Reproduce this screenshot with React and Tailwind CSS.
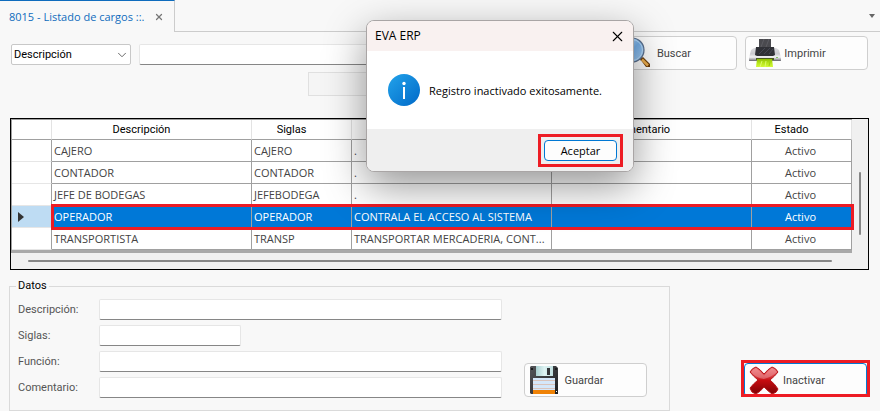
import { ChevronDown, X } from "lucide-react";

const rows = [
  { descripcion: "CAJERO", siglas: "CAJERO", funcion: ".", comentario: "", estado: "Activo" },
  { descripcion: "CONTADOR", siglas: "CONTADOR", funcion: ".", comentario: "", estado: "Activo" },
  { descripcion: "JEFE DE BODEGAS", siglas: "JEFEBODEGA", funcion: ".", comentario: "", estado: "Activo" },
  {
    descripcion: "OPERADOR",
    siglas: "OPERADOR",
    funcion: "CONTRALA EL ACCESO AL SISTEMA",
    comentario: "",
    estado: "Activo",
    selected: true,
  },
  {
    descripcion: "TRANSPORTISTA",
    siglas: "TRANSP",
    funcion: "TRANSPORTAR MERCADERIA, CONT...",
    comentario: "",
    estado: "Activo",
  },
];

const fields = [
  { id: "descripcion", label: "Descripción:" },
  { id: "siglas", label: "Siglas:", short: true },
  { id: "funcion", label: "Función:" },
  { id: "comentario", label: "Comentario:" },
];

const inputStyle =
  "h-[21px] min-w-0 rounded-[2px] border border-[#e6e6e6] border-b-[#868686] bg-white px-1 outline-none";

function SearchIcon() {
  return (
    <svg width="32" height="32" viewBox="0 0 32 32" className="shrink-0">
      <defs>
        <linearGradient id="lens" x1="0" y1="0" x2="1" y2="1">
          <stop offset="0" stopColor="#c9e2fa" />
          <stop offset="0.5" stopColor="#76aee6" />
          <stop offset="1" stopColor="#a9d2f7" />
        </linearGradient>
      </defs>
      <path d="M20 19l4 4" stroke="#9a9a9a" strokeWidth="3" />
      <path d="M22 22l3-2 7 7v3h-4z" fill="#6b3c0a" />
      <path d="M24 22.500l6 6" stroke="#eeb050" strokeWidth="2.500" />
      <circle cx="14" cy="13" r="12" fill="url(#lens)" stroke="#5b6f8c" strokeWidth="1.200" />
      <circle cx="14" cy="13" r="10.500" fill="none" stroke="#b9dcfa" strokeWidth="1" />
    </svg>
  );
}

function PrinterIcon() {
  return (
    <svg width="32" height="28" viewBox="0 0 32 28" className="shrink-0">
      <defs>
        <linearGradient id="body" x1="0" y1="0" x2="0" y2="1">
          <stop offset="0" stopColor="#dcdce0" />
          <stop offset="0.45" stopColor="#c9c9ce" />
          <stop offset="0.7" stopColor="#f4f4f6" />
          <stop offset="1" stopColor="#6f6f76" />
        </linearGradient>
        <linearGradient id="sheet" x1="0" y1="0" x2="0" y2="1">
          <stop offset="0" stopColor="#8fc000" />
          <stop offset="0.5" stopColor="#b6e61a" />
          <stop offset="1" stopColor="#d4f93a" />
        </linearGradient>
      </defs>
      <path d="M10 0h12v9H10z" fill="#4a4a4f" />
      <path d="M12 8l3-8M17 8l3-8" stroke="#5d5d63" />
      <path d="M5 9h22l3 2 2 8v3H0v-3l2-8z" fill="url(#body)" />
      <path d="M7 8h18l1 8-2 1H8l-2-1z" fill="#303137" />
      <path d="M10 15l6-6M15 15l6-6M20 15l4-5" stroke="#464853" />
      <path d="M1 21h30v1H1z" fill="#74747b" />
      <path d="M7 19h18v2H7z" fill="#4d5c22" />
      <path d="M8 20h15l1 8H7z" fill="url(#sheet)" />
      <path d="M11 28l2-6M16 28l1-6" stroke="#dcfa6a" />
      <path d="M20 27l1-4" stroke="#9ed010" />
      <path d="M27 18h2v1h-2z" fill="#7fbf63" />
    </svg>
  );
}

function FloppyIcon() {
  return (
    <svg width="28" height="28" viewBox="0 0 28 28" className="shrink-0">
      <defs>
        <linearGradient id="case" x1="0" y1="0" x2="1" y2="1">
          <stop offset="0" stopColor="#55565a" />
          <stop offset="1" stopColor="#1d1e21" />
        </linearGradient>
        <linearGradient id="shutter" x1="0" y1="0" x2="1" y2="0">
          <stop offset="0" stopColor="#a9cfd0" />
          <stop offset="0.5" stopColor="#def3f3" />
          <stop offset="1" stopColor="#c1dfe0" />
        </linearGradient>
      </defs>
      <path d="M1 0h25l2 2v26H1l-1-1V1z" fill="url(#case)" />
      <path d="M6 0h17v10H6z" fill="url(#shutter)" />
      <path d="M17 2h3v7h-3z" fill="#34363a" />
      <path d="M1 2h2v2H1zM25 2h2v2h-2z" fill="#1b1c1e" />
      <path d="M3 12h22v16H3z" fill="#d5e7fa" />
      <path d="M3 14.500h22M3 18.500h22M3 22.500h22" stroke="#d9c3bb" />
      <path d="M3 24h22v4H3z" fill="#ef8206" />
      <path d="M26 25h1v1h-1z" fill="#ffffff" />
    </svg>
  );
}

function CrossIcon() {
  return (
    <svg width="30" height="29" viewBox="0 0 30 29" className="shrink-0">
      <defs>
        <linearGradient id="cross" x1="0" y1="0" x2="0" y2="1">
          <stop offset="0" stopColor="#ee6a6e" />
          <stop offset="0.35" stopColor="#d83a40" />
          <stop offset="0.5" stopColor="#c60c10" />
          <stop offset="1" stopColor="#7d0205" />
        </linearGradient>
      </defs>
      <path
        d="M7 1Q11 3 15 8Q19 3 23 1Q27 2 29 6Q26 10 21 14Q26 18 29 23Q28 27 23 28Q19 25 15 21Q11 26 7 28Q2 27 1 22Q4 18 9 14Q4 10 1 6Q3 2 7 1Z"
        fill="url(#cross)"
        stroke="#b5171b"
        strokeWidth="1"
      />
      <path d="M7 2Q11 5 15 9.500Q19 5 23 2Q26 3 28 6Q23 11 15 13Q7 12 2 6Q4 3 7 2Z" fill="#ffffff" opacity="0.25" />
    </svg>
  );
}

function InfoIcon() {
  return (
    <svg width="32" height="32" viewBox="0 0 32 32" className="shrink-0">
      <defs>
        <linearGradient id="info" x1="0" y1="0" x2="1" y2="1">
          <stop offset="0" stopColor="#23a3ea" />
          <stop offset="1" stopColor="#0069c8" />
        </linearGradient>
      </defs>
      <circle cx="16" cy="16" r="16" fill="url(#info)" />
      <circle cx="16" cy="9.500" r="1.700" fill="#ffffff" />
      <path d="M15 13h2v12h-2z" fill="#ffffff" />
    </svg>
  );
}

function ToolButton({ icon, children, active }) {
  return (
    <button
      type="button"
      className={`flex h-[34px] w-[123px] shrink-0 items-center rounded-[4px] border bg-[#fdfdfd] text-[#444] ${
        active ? "border-[#0078d4]" : "border-[#cfcfcf]"
      }`}
    >
      <span className="flex w-[37px] justify-center">{icon}</span>
      <span className="w-11 pt-0.5 text-center">{children}</span>
    </button>
  );
}

function RolesTable() {
  const head = "h-[20px] border-r border-b border-r-[#e3e3e3] border-b-[#a0a0a0] p-0 pt-px pr-5 font-normal";
  return (
    <div className="mt-[22px] mr-[11px] ml-[10px] border border-black bg-[#f0f0f0]">
      <div className="flex">
        <div className="min-w-0 flex-1 border-t border-l border-[#a0a0a0]">
          <table className="w-full table-fixed border-separate border-spacing-0 border-b-3 border-[#a8a8a8] bg-white">
            <colgroup>
              <col className="w-[40px]" />
              <col className="w-[200px]" />
              <col className="w-[100px]" />
              <col className="w-[200px]" />
              <col className="w-[200px]" />
              <col className="w-[100px]" />
            </colgroup>
            <thead>
              <tr className="text-black">
                <td className={head}></td>
                <th className={head}>Descripción</th>
                <th className={head}>Siglas</th>
                <th className={head}>Función</th>
                <th className={head}>Comentario</th>
                <th className={head}>Estado</th>
              </tr>
            </thead>
            <tbody className="font-['Open_Sans',Tahoma,sans-serif]">
              {rows.map((row) => {
                const cell = `h-[22px] truncate border-r border-b border-[#a0a0a0] py-0 pr-1 pl-[2px] ${
                  row.selected ? "bg-[#0078d7] text-white" : ""
                }`;
                return (
                  <tr key={row.descripcion} className="relative text-[#444]">
                    <td
                      className={`border-r border-b border-r-[#a0a0a0] border-b-[#e6e6e6] p-0 ${
                        row.selected ? "bg-[#bedcf3]" : ""
                      }`}
                    >
                      {row.selected && (
                        <>
                          <svg width="6" height="10" viewBox="0 0 6 10" className="ml-1.5">
                            <path d="M0 0l6 5-6 5z" fill="#333333" />
                          </svg>
                          <span className="absolute -top-[2px] -right-[2px] -bottom-[2px] left-[39px] z-10 border-3 border-[#ed1c24]" />
                        </>
                      )}
                    </td>
                    <td className={cell}>{row.descripcion}</td>
                    <td className={cell}>{row.siglas}</td>
                    <td className={cell}>{row.funcion}</td>
                    <td className={cell}>{row.comentario}</td>
                    <td className={`${cell} text-center`}>{row.estado}</td>
                  </tr>
                );
              })}
            </tbody>
          </table>
        </div>
        {/* Vertical scrollbar */}
        <div className="flex w-4 justify-center pt-[53px]">
          <div className="h-[63px] w-[2px] rounded-full bg-[#868686]" />
        </div>
      </div>
      {/* Horizontal scrollbar */}
      <div className="flex h-4 items-center pr-[36px] pl-[17px]">
        <div className="h-[2px] w-full rounded-full bg-[#868686]" />
      </div>
    </div>
  );
}

function MessageDialog() {
  return (
    <div
      role="dialog"
      aria-labelledby="dialog-title"
      className="absolute top-5 left-[366px] z-20 w-[268px] overflow-hidden rounded-[8px] border border-[#a9a5a5] bg-white font-['Open_Sans',Tahoma,sans-serif] text-black shadow-[0_14px_42px_rgba(0,0,0,0.42)]"
    >
      <div className="flex h-[30px] items-center justify-between bg-[#f9f1f0] pr-[7px] pl-2">
        <h2 id="dialog-title" className="text-[12px]">
          EVA ERP
        </h2>
        <button type="button" aria-label="Cerrar">
          <X size={17} strokeWidth={1.5} />
        </button>
      </div>
      <div className="flex h-[78px] items-center gap-[9px] pl-[21px]">
        <InfoIcon />
        <p className="pt-0.5 whitespace-nowrap">Registro inactivado exitosamente.</p>
      </div>
      <div className="flex h-[42px] items-center justify-end bg-[#efefef] pr-[10px]">
        <div className="border-3 border-[#ed1c24] p-[3px]">
          <button
            type="button"
            className="block h-[21px] w-[73px] rounded-[4px] border border-[#0078d4] bg-[#fdfdfd] pt-px"
          >
            Aceptar
          </button>
        </div>
      </div>
    </div>
  );
}

export default function App() {
  return (
    <div className="relative min-h-screen overflow-hidden bg-[#f8f8f8] font-[Roboto,Tahoma,sans-serif] text-[11px] leading-[14px]">
      {/* Tabs */}
      <div className="flex h-8">
        <div className="flex w-[175px] items-center justify-between border-t border-r border-t-[#0f6cbd] border-r-[#cccccc] pr-[10px] pl-[9px] font-['Open_Sans',Tahoma,sans-serif] text-[#0f6cbd]">
          <a href="#listado">8015 - Listado de cargos ::.</a>
          <button type="button" aria-label="Cerrar pestaña" className="text-[#777]">
            <X size={10} strokeWidth={3} />
          </button>
        </div>
        <div className="flex flex-1 items-center justify-end border-b border-[#cccccc] pr-[5px]">
          <svg width="6" height="4" viewBox="0 0 6 4">
            <path d="M0 0h6L3 4z" fill="#666666" />
          </svg>
        </div>
      </div>

      {/* Search */}
      <div className="flex gap-2 pt-1 pr-[12px] pl-[11px]">
        <div className="relative mt-2 h-[21px] w-[120px] shrink-0">
          <select
            aria-label="Buscar por"
            className="h-full w-full appearance-none rounded-[2px] border border-[#c8c8c8] bg-white pt-px pl-[2px] text-black outline-none"
          >
            <option>Descripción</option>
          </select>
          <ChevronDown
            size={14}
            strokeWidth={1.5}
            className="pointer-events-none absolute top-1 right-[2px] text-[#555]"
          />
        </div>
        <input aria-label="Texto a buscar" className={`${inputStyle} mt-2 flex-1`} />
        <ToolButton icon={<SearchIcon />}>Buscar</ToolButton>
        <ToolButton icon={<PrinterIcon />}>Imprimir</ToolButton>
      </div>
      <div className="mt-[2px] pl-[308px]">
        <input
          aria-label="Filtro"
          disabled
          className="block h-6 w-[200px] border border-[#e0e0e0] bg-[#f5f5f5]"
        />
      </div>

      <RolesTable />

      {/* Form */}
      <div className="mt-[9px] flex items-end gap-[71px] pr-[10px] pl-[9px]">
        <fieldset className="min-w-0 flex-1 border border-[#dadada] pr-[22px] pb-3 pl-2">
          <legend className="-ml-[2px] px-[2px] text-black">Datos</legend>
          <div className="flex items-end gap-[22px] pt-1.5">
            <div className="flex flex-1 flex-col gap-[5px]">
              {fields.map((field) => (
                <div key={field.id} className="flex items-center">
                  <label htmlFor={field.id} className="w-[81px] shrink-0 pt-px text-[#555]">
                    {field.label}
                  </label>
                  <input id={field.id} className={`${inputStyle} ${field.short ? "w-[142px]" : "flex-1"}`} />
                </div>
              ))}
            </div>
            <div className="mb-px">
              <ToolButton icon={<FloppyIcon />}>Guardar</ToolButton>
            </div>
          </div>
        </fieldset>
        <div className="mb-[14px] h-[37px] w-[129px] shrink-0 overflow-hidden border-3 border-[#ed1c24]">
          <ToolButton icon={<CrossIcon />} active>
            Inactivar
          </ToolButton>
        </div>
      </div>

      <MessageDialog />
    </div>
  );
}
